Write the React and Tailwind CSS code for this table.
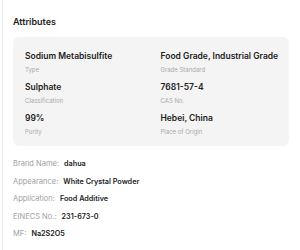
import React from 'react';

const attrs = [
  { value: 'Sodium Metabisulfite', label: 'Type' },
  { value: 'Food Grade, Industrial Grade', label: 'Grade Standard' },
  { value: 'Sulphate', label: 'Classification' },
  { value: '7681-57-4', label: 'CAS No.' },
  { value: '99%', label: 'Purity' },
  { value: 'Hebei, China', label: 'Place of Origin' },
];

const details = [
  ['Brand Name:', 'dahua'],
  ['Appearance:', 'White Crystal Powder'],
  ['Application:', 'Food Additive'],
  ['EINECS No.:', '231-673-0'],
  ['MF:', 'Na2S2O5'],
];

export default function App() {
  return (
    <div className="w-[300px] h-[250px] bg-white overflow-hidden font-['Inter',sans-serif]">
      <div className="h-full border-l border-[#ececec] ml-[2px] pl-[10px] pr-[11px] pt-[16px]">
        <h3 className="text-[9px] font-semibold text-[#222] leading-[11px]">Attributes</h3>

        <div className="mt-[10px] bg-[#f4f4f4] rounded-[6px] px-[12px] pt-[13px] pb-[3px] grid grid-cols-2 gap-x-[19px]">
          {attrs.map(a => (
            <div key={a.label} className="h-[31px]">
              <div className="text-[8.5px] font-semibold text-[#222] leading-[12px] whitespace-nowrap">{a.value}</div>
              <div className="text-[6px] text-[#aaa] leading-[9px] mt-[3px]">{a.label}</div>
            </div>
          ))}
        </div>

        <div className="mt-[12px] flex flex-col gap-[6px]">
          {details.map(([k, v]) => (
            <div key={k} className="flex items-center gap-[5px] leading-[11.5px] whitespace-nowrap">
              <span className="text-[7.5px] text-[#a0a0a0]">{k}</span>
              <span className="text-[7.25px] font-semibold text-[#222]">{v}</span>
            </div>
          ))}
        </div>
      </div>
    </div>
  );
}
